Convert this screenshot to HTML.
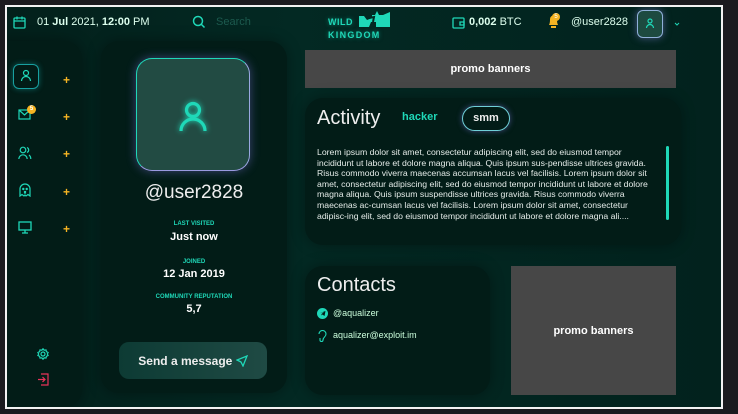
<!DOCTYPE html>
<html><head><meta charset="utf-8"><style>
*{margin:0;padding:0;box-sizing:border-box}
body{width:738px;height:414px;background:#1b1b1f;font-family:"Liberation Sans",sans-serif;position:relative;overflow:hidden;color:#fff}
.frame{position:absolute;left:5px;top:5px;width:718px;height:404px;border:2px solid #f2f2f2;background:linear-gradient(90deg,#03201b,#032923 40%,#02221d);overflow:hidden}
.w{position:absolute;left:-2px;top:-2px;width:718px;height:404px}
.a{position:absolute}
.panel{position:absolute;background:#021c17;border-radius:18px;box-shadow:0 0 14px rgba(0,0,0,.35)}
.t{color:#d8e4e0;font-size:11px}
.plus{position:absolute;left:58px;color:#f5b423;font-size:12px;font-weight:bold}
.promo{position:absolute;background:#474747;color:#fff;font-weight:bold;font-size:11px;display:flex;align-items:center;justify-content:center}
.lbl{position:absolute;left:0;width:186px;text-align:center;color:#1fd8b8;font-size:6px;font-weight:bold}
.val{position:absolute;left:0;width:186px;text-align:center;color:#fff;font-size:11px;font-weight:bold}
</style></head><body>
<div class="frame"><div class="w">
<!-- top bar -->
<svg class="a" style="left:8px;top:11px" width="13" height="13" viewBox="0 0 13 13" fill="none" stroke="#1fd8b8" stroke-width="1.3"><rect x="1" y="2" width="11" height="10" rx="1"/><path d="M1 5h11M4 0.5v3M9 0.5v3"/></svg>
<div class="a t" style="left:32px;top:11px;font-size:11px;color:#dfe">01 <b>Jul</b> 2021, <b>12:00</b> PM</div>
<svg class="a" style="left:187px;top:10px" width="14" height="14" viewBox="0 0 14 14" fill="none" stroke="#1fd8b8" stroke-width="1.5"><circle cx="6" cy="6" r="4.5"/><path d="M9.5 9.5l3 3"/></svg>
<div class="a" style="left:211px;top:11px;font-size:11px;color:#1c5a4e">Search</div>
<div class="a" style="left:323px;top:11px;font-size:9px;font-weight:900;color:#1fd8b8;line-height:13px;text-shadow:0 0 4px rgba(31,216,184,.5)"><span style="letter-spacing:.5px">WILD</span><br><span style="letter-spacing:1.3px">KINGDOM</span></div>
<svg class="a" style="left:353px;top:6px" width="33" height="17" viewBox="0 0 33 17"><path d="M1 5h5l3 4 5-2 0-3 3 0 2-4 2 4 4 0 7-3v15H18l0-5-5 0 -2 5H1z" fill="#1fd8b8"/><path d="M11 7l5-1-1 5" stroke="#032923" stroke-width="2" fill="none"/></svg>
<svg class="a" style="left:447px;top:11px" width="13" height="13" viewBox="0 0 13 13" fill="none" stroke="#1fd8b8" stroke-width="1.3"><rect x="1" y="2" width="11" height="10" rx="1"/><path d="M8 6h4v3H8z"/></svg>
<div class="a" style="left:464px;top:11px;font-size:11px;color:#dfe"><b>0,002</b> BTC</div>
<svg class="a" style="left:542px;top:9px" width="13" height="15" viewBox="0 0 13 15"><path d="M2 11c1-2 1-4 1-6a3.5 3.5 0 017 0c0 2 0 4 1 6z" fill="#f5b423"/><rect x="4" y="12" width="5" height="2" fill="#f5b423"/></svg>
<div class="a" style="left:547px;top:8px;width:8px;height:8px;border-radius:50%;background:#f5b423;font-size:6px;color:#fff;text-align:center;line-height:8px">5</div>
<div class="a" style="left:566px;top:11px;font-size:11px;color:#dfe">@user2828</div>
<div class="a" style="left:632px;top:5px;width:26px;height:28px;border-radius:6px;border:1.5px solid #8fb0d8;background:#1d4a40;box-shadow:0 0 8px rgba(140,140,230,.5)"></div>
<svg class="a" style="left:640px;top:13px" width="10" height="11" viewBox="0 0 10 11" fill="none" stroke="#1fd8b8" stroke-width="1.2"><circle cx="5" cy="3" r="2"/><path d="M1.5 10a3.5 3.5 0 017 0"/></svg>
<svg class="a" style="left:669px;top:17px" width="6" height="4" viewBox="0 0 6 4" fill="none" stroke="#1fd8b8" stroke-width="1"><path d="M1 1l2 2 2-2"/></svg>

<!-- sidebar -->
<div class="panel" style="left:-20px;top:36px;width:97px;height:366px"></div>
<div class="a" style="left:8px;top:59px;width:26px;height:25px;border-radius:6px;border:1.3px solid #18a0a0;box-shadow:0 0 6px rgba(30,200,200,.4)"></div>
<svg class="a" style="left:15px;top:64px" width="12" height="13" viewBox="0 0 12 13" fill="none" stroke="#1fd8b8" stroke-width="1.2"><circle cx="6" cy="4" r="2.5"/><path d="M1.5 12a4.5 4.5 0 019 0"/></svg>
<svg class="a" style="left:13px;top:104px" width="13" height="11" viewBox="0 0 13 11" fill="none" stroke="#1fd8b8" stroke-width="1.2"><rect x="1" y="1" width="11" height="9"/><path d="M1 1l5.5 5 5.5-5"/></svg>
<div class="a" style="left:22px;top:100px;width:9px;height:9px;border-radius:50%;background:#f5b423;font-size:6px;font-weight:bold;text-align:center;line-height:9px">5</div>
<svg class="a" style="left:13px;top:141px" width="14" height="14" viewBox="0 0 14 14" fill="none" stroke="#1fd8b8" stroke-width="1.2"><circle cx="5" cy="4" r="2.8"/><path d="M0.8 13a4.2 4.2 0 018.4 0M9 1.5a2.7 2.7 0 010 5M11 9c1.3 1 1.8 2.5 1.8 4"/></svg>
<svg class="a" style="left:14px;top:178px" width="12" height="14" viewBox="0 0 12 14" fill="none" stroke="#1fd8b8" stroke-width="1.2"><path d="M1 13V6a5 5 0 0110 0v7l-2-1.5-2 1.5-1-1-1 1-2-1.5z"/><circle cx="4.3" cy="6" r=".6"/><circle cx="7.7" cy="6" r=".6"/><path d="M5.5 8.5h1v1.5h-1z"/></svg>
<svg class="a" style="left:13px;top:216px" width="14" height="13" viewBox="0 0 14 13" fill="none" stroke="#1fd8b8" stroke-width="1.3"><rect x="1" y="1" width="12" height="8"/><path d="M7 9v3M4 12h6"/></svg>
<div class="plus" style="top:68px">+</div><div class="plus" style="top:105px">+</div><div class="plus" style="top:142px">+</div><div class="plus" style="top:180px">+</div><div class="plus" style="top:217px">+</div>
<svg class="a" style="left:32px;top:343px" width="12" height="12" viewBox="0 0 12 12" fill="none" stroke="#1fd8b8" stroke-width="1.2"><circle cx="6" cy="6" r="2"/><path d="M6 .8l1.2 1.4 1.8-.3.4 1.8 1.7.8-.8 1.5.8 1.5-1.7.8-.4 1.8-1.8-.3L6 11.2 4.8 9.8 3 10.1l-.4-1.8L.9 7.5 1.7 6 .9 4.5l1.7-.8L3 1.9l1.8.3z"/></svg>
<svg class="a" style="left:32px;top:368px" width="12" height="13" viewBox="0 0 12 13" fill="none" stroke="#e8335a" stroke-width="1.2"><path d="M4 1h7v11H4M1 6.5h7M5.5 4l2.5 2.5L5.5 9"/></svg>

<!-- profile panel -->
<div class="panel" style="left:96px;top:36px;width:186px;height:352px">
 <div class="a" style="left:35px;top:17px;width:114px;height:113px;border-radius:16px;background:#224b43;border:1.5px solid #1fd8b8;border-bottom-color:#9a9ae0;border-right-color:#9aa8e0;box-shadow:0 0 10px rgba(130,120,230,.45)"></div>
 <svg class="a" style="left:78px;top:60px;filter:drop-shadow(0 0 3px #1fd8b8)" width="28" height="32" viewBox="0 0 28 32" fill="none" stroke="#1fd8b8" stroke-width="3.2"><circle cx="14" cy="9" r="6.5"/><path d="M2 30a12 12 0 0124 0"/></svg>
 <div class="a" style="left:0;top:141px;width:186px;text-align:center;font-size:19px;color:#eee">@user2828</div>
 <div class="lbl" style="top:180px">LAST VISITED</div><div class="val" style="top:190px">Just now</div>
 <div class="lbl" style="top:218px">JOINED</div><div class="val" style="top:227px">12 Jan 2019</div>
 <div class="lbl" style="top:253px">COMMUNITY REPUTATION</div><div class="val" style="top:262px">5,7</div>
 <div class="a" style="left:18px;top:301px;width:148px;height:37px;border-radius:10px;background:linear-gradient(90deg,#0d3b34,#1f4a44);display:flex;align-items:center;justify-content:center;font-size:12px;font-weight:bold;color:#eee">Send a message&nbsp;
  <svg width="12" height="12" viewBox="0 0 12 12" fill="none" stroke="#1fd8b8" stroke-width="1.3"><path d="M11 1L1 5l4 2 2 4z"/></svg></div>
</div>

<!-- promo top -->
<div class="promo" style="left:300px;top:45px;width:371px;height:38px">promo banners</div>

<!-- activity -->
<div class="panel" style="left:300px;top:93px;width:376px;height:147px">
 <div class="a" style="left:12px;top:9px;font-size:20px;color:#eee">Activity</div>
 <div class="a" style="left:97px;top:13px;font-size:11px;font-weight:bold;color:#1fd8b8">hacker</div>
 <div class="a" style="left:157px;top:8px;width:48px;height:25px;border-radius:13px;border:1.5px solid #6fd0d8;box-shadow:0 0 6px rgba(130,120,230,.5);text-align:center;line-height:22px;font-size:11px;font-weight:bold;color:#eee">smm</div>
 <div class="a" style="left:12px;top:49px;width:334px;font-size:8.7px;line-height:10.6px;color:#e5ece9">Lorem ipsum dolor sit amet, consectetur adipiscing elit, sed do eiusmod tempor incididunt ut labore et dolore magna aliqua. Quis ipsum sus-pendisse ultrices gravida. Risus commodo viverra maecenas accumsan lacus vel facilisis. Lorem ipsum dolor sit amet, consectetur adipiscing elit, sed do eiusmod tempor incididunt ut labore et dolore magna aliqua. Quis ipsum suspendisse ultrices gravida. Risus commodo viverra maecenas ac-cumsan lacus vel facilisis. Lorem ipsum dolor sit amet, consectetur adipisc-ing elit, sed do eiusmod tempor incididunt ut labore et dolore magna ali....</div>
 <div class="a" style="left:361px;top:48px;width:3px;height:74px;border-radius:2px;background:#1fd8b8"></div>
</div>

<!-- contacts -->
<div class="panel" style="left:300px;top:261px;width:185px;height:129px">
 <div class="a" style="left:12px;top:8px;font-size:20px;color:#eee">Contacts</div>
 <svg class="a" style="left:12px;top:42px" width="11" height="11" viewBox="0 0 11 11"><circle cx="5.5" cy="5.5" r="5.5" fill="#1fd8b8"/><path d="M2.5 5.3l6-2.3-1 5-2-1.5-1 1v-1.5l2.5-2" fill="#021c17"/></svg>
 <div class="a" style="left:28px;top:42px;font-size:9px;color:#cfd">@aqualizer</div>
 <svg class="a" style="left:12px;top:64px" width="10" height="12" viewBox="0 0 10 12" fill="none" stroke="#1fd8b8" stroke-width="1.1"><path d="M2 4a3.5 3.5 0 017 0c0 3-3 3-3 6a1.5 1.5 0 01-3 0M3 8v2"/></svg>
 <div class="a" style="left:28px;top:64px;font-size:9px;color:#cfd">aqualizer@exploit.im</div>
</div>

<div class="promo" style="left:506px;top:261px;width:165px;height:129px">promo banners</div>
</div></div>
</body></html>
